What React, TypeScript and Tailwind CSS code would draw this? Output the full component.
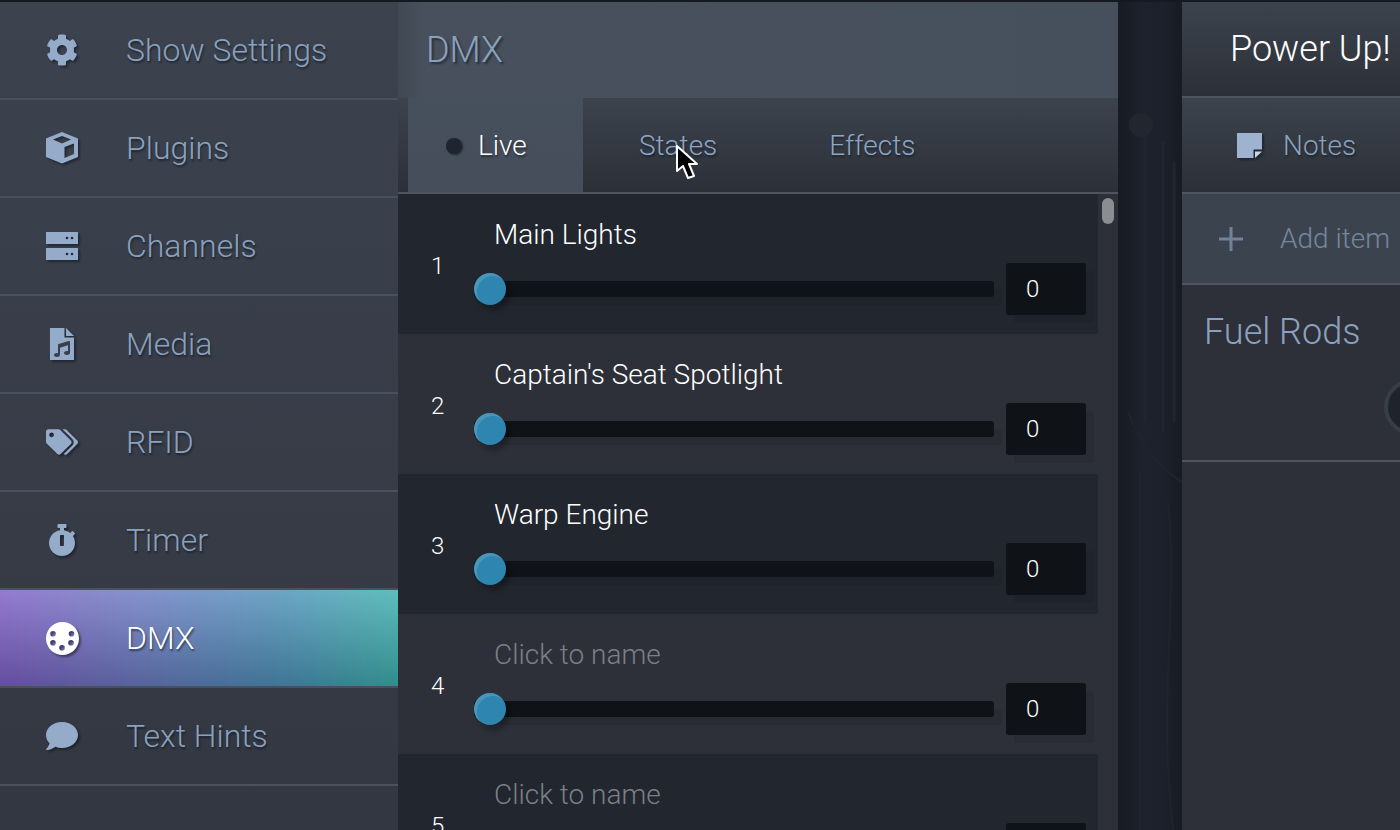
import React from "react";
import { FaCog, FaTags, FaStopwatch, FaComment, FaMusic } from "react-icons/fa";

const iconShadow = "drop-shadow-[2px_2px_1px_rgba(15,20,30,0.55)]";

function Cube() {
  return (
    <svg viewBox="0 0 32 32" className={`w-8 h-8 ${iconShadow}`} fill="currentColor">
      <path fillRule="evenodd" d="M16 0L32 6.5V25L16 31.5L0 25V6.5ZM16 4L7 7.5L16 11.5L25 7.5ZM18.5 15V26L28 22V11.5Z" />
    </svg>
  );
}
function Server() {
  return (
    <svg viewBox="0 0 32 28" className={`w-8 h-7 ${iconShadow}`} fill="currentColor">
      <path fillRule="evenodd" d="M0 0H32V12H0ZM21 4.7a1.3 1.3 0 1 0 0 2.6a1.3 1.3 0 0 0 0-2.6ZM26 4.7a1.3 1.3 0 1 0 0 2.6a1.3 1.3 0 0 0 0-2.6ZM0 16H32V28H0ZM21 20.7a1.3 1.3 0 1 0 0 2.6a1.3 1.3 0 0 0 0-2.6ZM26 20.7a1.3 1.3 0 1 0 0 2.6a1.3 1.3 0 0 0 0-2.6Z" />
    </svg>
  );
}
function FileAudio() {
  return (
    <svg viewBox="0 0 24 32" className={`w-6 h-8 ${iconShadow}`} fill="currentColor">
      <path d="M0 0H14.5V9.5H24V32H0Z" />
      <path d="M16 0L24 8H16Z" />
      <FaMusic x={4} y={13} width={15} height={15} color="#39404b" />
    </svg>
  );
}
function DmxPlug() {
  return (
    <svg viewBox="0 0 33 33" className={`w-[33px] h-[33px] ${iconShadow}`} fill="currentColor">
      <path
        fillRule="evenodd"
        d="M16.5 0a16.5 16.5 0 1 0 0 33a16.5 16.5 0 0 0 0-33ZM7 9a2.8 2.8 0 1 0 0 5.6a2.8 2.8 0 0 0 0-5.6ZM25.5 9a2.8 2.8 0 1 0 0 5.6a2.8 2.8 0 0 0 0-5.6ZM7 18a2.8 2.8 0 1 0 0 5.6a2.8 2.8 0 0 0 0-5.6ZM25 18a2.8 2.8 0 1 0 0 5.6a2.8 2.8 0 0 0 0-5.6ZM16 23a2.8 2.8 0 1 0 0 5.6a2.8 2.8 0 0 0 0-5.6Z"
      />
    </svg>
  );
}
function StickyNote() {
  return (
    <svg viewBox="0 0 25 25" className={`w-[25px] h-[25px] ${iconShadow}`}>
      <path d="M0 0H25V16.5H16.5V25H0Z" fill="#9db3d0" />
      <path d="M18 18.5H25L18 25Z" fill="#c9d4e4" />
    </svg>
  );
}

const navItems: { label: string; icon: React.ReactNode; active?: boolean }[] = [
  { label: "Show Settings", icon: <FaCog size={32} className={iconShadow} /> },
  { label: "Plugins", icon: <Cube /> },
  { label: "Channels", icon: <Server /> },
  { label: "Media", icon: <FileAudio /> },
  { label: "RFID", icon: <FaTags size={32} className={iconShadow} /> },
  { label: "Timer", icon: <FaStopwatch size={32} className={iconShadow} /> },
  { label: "DMX", icon: <DmxPlug />, active: true },
  { label: "Text Hints", icon: <FaComment size={32} className={iconShadow} /> },
];

const channels = [
  { n: 1, name: "Main Lights" },
  { n: 2, name: "Captain's Seat Spotlight" },
  { n: 3, name: "Warp Engine" },
  { n: 4, name: "" },
  { n: 5, name: "" },
];

function Sidebar() {
  return (
    <div className="w-[398px] shrink-0 flex flex-col bg-[linear-gradient(180deg,#3c434e,#333742)]">
      {navItems.map((item) => (
        <div
          key={item.label}
          className={
            "h-[98px] shrink-0 flex items-center border-b-2 " +
            (item.active
              ? "border-[#47505f] bg-[linear-gradient(180deg,rgba(255,255,255,0.17),rgba(0,0,0,0.2)),linear-gradient(90deg,#7f60c6,#6c7cc2_35%,#4f92ba_70%,#3fb0ae)] text-white"
              : "border-[#4a515e] text-[#8aa1be]")
          }
        >
          <div className={"w-[126px] shrink-0 flex items-center justify-center pr-[2px] " + (item.active ? "text-white" : "text-[#94abc9]")}>
            {item.icon}
          </div>
          <span className="text-[32px] font-light leading-none [text-shadow:1px_2px_2px_rgba(15,20,30,0.6)]">
            {item.label}
          </span>
        </div>
      ))}
    </div>
  );
}

function Row({ n, name, odd }: { n: number; name: string; odd: boolean }) {
  return (
    <div className={"h-[140px] shrink-0 flex text-white " + (odd ? "bg-[#22262f]" : "bg-[#2d3039]")}>
      <div className="w-[76px] shrink-0 pl-[33px] pt-[56px] text-[24px] font-light leading-[32px]">{n}</div>
      <div className="flex-1 flex flex-col pr-3">
        <div className={"h-[69px] pl-5 pt-[23px] text-[28px] font-light leading-[36px] whitespace-nowrap " + (name ? "" : "text-[#7b7f86]")}>
          {name || "Click to name"}
        </div>
        <div className="flex items-center gap-3">
          <div className="relative flex-1 h-4 rounded-[3px] bg-[#0f1216] shadow-[8px_8px_0_rgba(0,0,0,0.07)]">
            <div className="absolute left-0 -top-2 w-8 h-8 rounded-full bg-[#2d85b0] shadow-[4px_6px_4px_rgba(0,0,0,0.25),inset_3px_3px_0_rgba(130,180,205,0.35)]" />
          </div>
          <div className="w-20 h-[52px] rounded-[3px] bg-[#0f1216] pl-[20px] text-[24px] font-light leading-[52px] shadow-[8px_8px_0_rgba(0,0,0,0.07)]">
            0
          </div>
        </div>
      </div>
    </div>
  );
}

function DmxPanel() {
  return (
    <div className="w-[720px] shrink-0 flex flex-col relative">
      <div className="h-[96px] shrink-0 flex items-center pl-7 bg-[linear-gradient(90deg,#414955,#47505c_4%,#46505c)] text-[#8aa1be] text-[36px] font-light [text-shadow:2px_2px_2px_rgba(15,20,30,0.55)]">
        DMX
      </div>
      <div className="h-[96px] shrink-0 flex pl-[10px] border-b-2 border-[#4d5561] bg-[linear-gradient(180deg,#3c434d,#2c3038)] text-[28px] font-light">
        <div className="w-[175px] flex items-center pl-[38px] gap-4 pt-[1px] bg-[linear-gradient(180deg,#46505c,#454e5a)] text-white [text-shadow:1px_2px_2px_rgba(15,20,30,0.55)]">
          <span className="w-4 h-4 rounded-full bg-[#1f2530] shadow-[1px_1px_2px_rgba(0,0,0,0.5)]" />
          Live
        </div>
        {["States", "Effects"].map((t) => (
          <div key={t} className="px-14 pt-[1px] flex items-center text-[#8ea6c6] [text-shadow:1px_2px_2px_rgba(15,20,30,0.55)]">
            {t}
          </div>
        ))}
      </div>
      <div className="flex-1 min-h-0 flex bg-[#2d3039] overflow-hidden">
        <div className="w-[700px] shrink-0 flex flex-col">
          {channels.map((c, i) => (
            <Row key={c.n} n={c.n} name={c.name} odd={i % 2 === 0} />
          ))}
        </div>
        <div className="flex-1 flex justify-center pt-1">
          <div className="w-3 h-[26px] rounded-full bg-[#8a8d92]" />
        </div>
      </div>
      <svg className="absolute left-[278px] top-[143px] w-[24px] h-[36px]" viewBox="0 0 24 36">
        <path d="M1 1V26L7 21L12 33L18 31L13 19L21 19Z" fill="#000" stroke="#fff" strokeWidth="2" strokeLinejoin="round" />
      </svg>
    </div>
  );
}

function Backdrop() {
  return (
    <div className="w-16 shrink-0 bg-[linear-gradient(90deg,#171b23,#1d222c_40%,#1b202a_75%,#171b22)]">
      <svg viewBox="0 0 64 828" className="w-16 h-full" fill="none">
        <circle cx="23" cy="123" r="12" fill="#22272f" />
        <path d="M27 130V420M45 140V430M56 160V420" stroke="#20252e" strokeWidth="3" />
        <path d="M10 410C30 460 50 470 64 480M22 470V828M50 500C60 600 40 700 55 828" stroke="#1f242d" strokeWidth="2" />
      </svg>
    </div>
  );
}

function RightPanel() {
  return (
    <div className="flex-1 min-w-0 flex flex-col bg-[#2d3039] overflow-hidden">
      <div className="h-[96px] shrink-0 flex items-center pl-[48px] border-b-2 border-[#4d5561] bg-[linear-gradient(180deg,#3c434d,#2c3038)] text-white text-[36px] font-light whitespace-nowrap">
        Power Up!
      </div>
      <div className="h-[96px] shrink-0 flex items-center pl-[55px] gap-[21px] pt-[1px] border-b-2 border-[#4d5561] bg-[linear-gradient(180deg,#3c434d,#2c3038)] text-[28px] font-light text-[#8ba2bf] [text-shadow:1px_2px_2px_rgba(15,20,30,0.55)]">
        <StickyNote />
        Notes
      </div>
      <div className="h-[91px] shrink-0 flex items-center pl-[37px] gap-[37px] border-b-2 border-[#4d5561] bg-[#3b444e] text-[28px] font-light text-[#75879f] whitespace-nowrap">
        <svg viewBox="0 0 24 24" className="w-6 h-6 shrink-0" stroke="#71839b" strokeWidth="3">
          <path d="M12 0V24M0 12H24" />
        </svg>
        Add item
      </div>
      <div className="h-[177px] shrink-0 flex flex-col border-b-2 border-[#4d5561]">
        <div className="pl-[22px] pt-[25px] text-[36px] font-light leading-[44px] text-[#8ba2bf] whitespace-nowrap">Fuel Rods</div>
        <div className="pl-[202px] pt-[25px]">
          <div className="w-14 h-14 rounded-full bg-[#1f242c] border-4 border-[#383d47]" />
        </div>
      </div>
    </div>
  );
}

export default function App() {
  return (
    <div className="w-[1400px] h-[830px] overflow-hidden flex pt-[2px] bg-[#151922] font-['Roboto',sans-serif]">
      <Sidebar />
      <DmxPanel />
      <Backdrop />
      <RightPanel />
    </div>
  );
}
